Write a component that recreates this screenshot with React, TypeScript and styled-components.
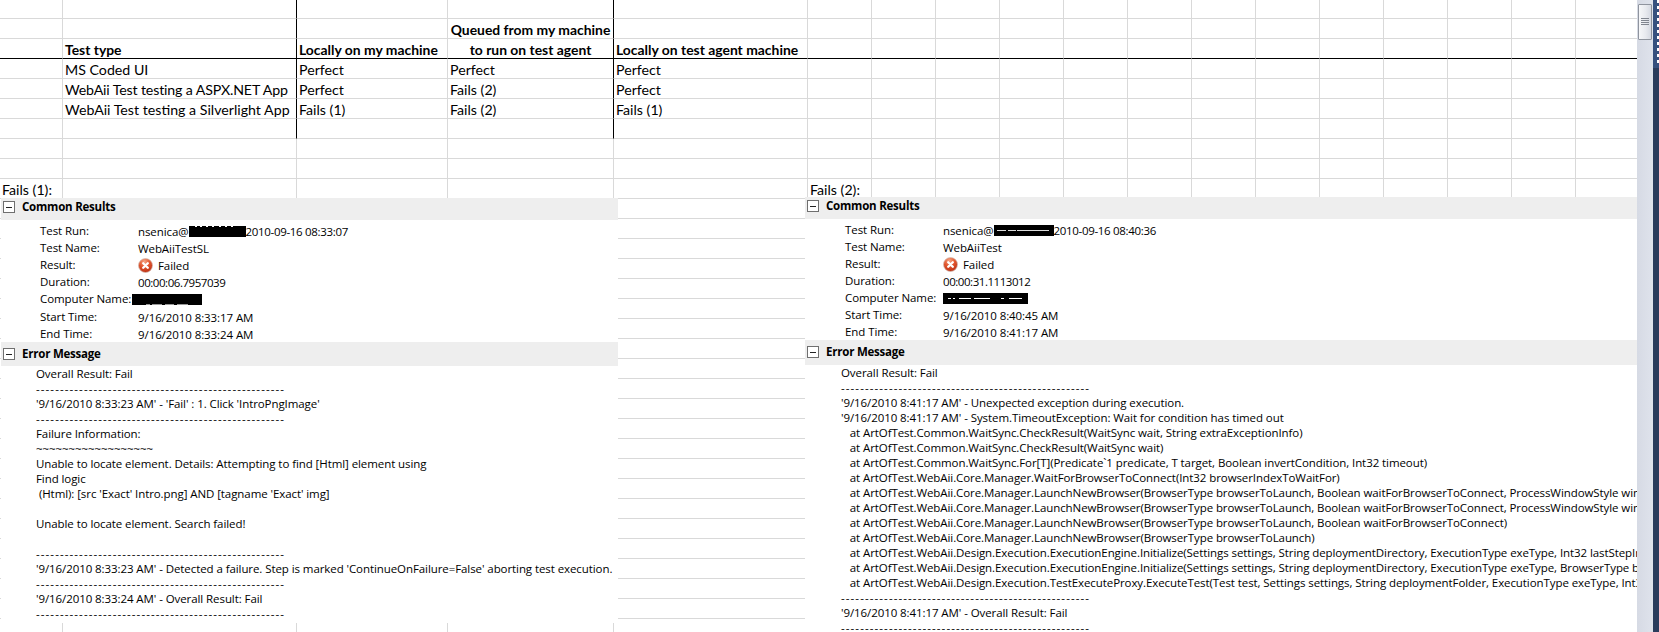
import React from "react";
import styled, { createGlobalStyle } from "styled-components";

const GlobalStyle = createGlobalStyle`
  html, body { margin: 0; padding: 0; background: #fff; overflow: hidden; }
`;

const COLS = [63, 234, 151, 166, 194, 64, 64, 64, 64, 64, 64, 64, 64, 64, 64, 64, 64, 62];
const ROWS = [19, ...Array(31).fill(20)];

const Page = styled.div`
  display: flex;
  width: 1659px;
  height: 632px;
  overflow: hidden;
`;
const Sheet = styled.div`
  position: relative;
  width: 1637px;
  height: 632px;
  overflow: hidden;
`;
const Grid = styled.div`
  display: grid;
  grid-template-columns: ${COLS.map((c) => c + "px").join(" ")};
  grid-template-rows: ${ROWS.map((r) => r + "px").join(" ")};
  font-family: "Lato", sans-serif;
  font-size: 14.2px;
  color: #000;
`;
const Cell = styled.div<{ $rb: boolean; $bb: boolean; $bold?: boolean; $center?: boolean; $tight?: boolean }>`
  box-sizing: border-box;
  border-right: 1px solid ${(p) => (p.$rb ? "#000" : "#d9d9d9")};
  border-bottom: 1px solid ${(p) => (p.$bb ? "#000" : "#d9d9d9")};
  padding: 1px 2px 0 2px;
  font-size: ${(p) => (p.$bold ? "13.9px" : "14.2px")};
  font-weight: ${(p) => (p.$bold ? 700 : 400)};
  text-align: ${(p) => (p.$center ? "center" : "left")};
  letter-spacing: ${(p) => (p.$tight ? "-0.15px" : "normal")};
  line-height: 19px;
  white-space: nowrap;
`;

const Window = styled.div<{ $left: number; $top: number; $width: number; $height: number }>`
  position: absolute;
  left: ${(p) => p.$left}px;
  top: ${(p) => p.$top}px;
  width: ${(p) => p.$width}px;
  height: ${(p) => p.$height}px;
  background: #fff;
  overflow: hidden;
  font-family: "Open Sans", sans-serif;
  font-size: 11.5px;
  letter-spacing: -0.08px;
  color: #000;
`;
const SectionHeader = styled.div<{ $h: number; $top: number }>`
  box-sizing: border-box;
  display: flex;
  align-items: flex-start;
  height: ${(p) => p.$h}px;
  background: #eeeeee;
  padding: ${(p) => p.$top}px 0 0 2px;
  gap: 7px;
`;
const Toggle = styled.span`
  box-sizing: border-box;
  width: 12px;
  height: 12px;
  border: 1px solid #6f6f6f;
  background: #fff;
  display: flex;
  align-items: center;
  justify-content: center;
  &::before {
    content: "";
    width: 6px;
    height: 1px;
    background: #222;
  }
`;
const SectionTitle = styled.span`
  font-weight: 700;
  font-size: 11.5px;
  letter-spacing: -0.22px;
  line-height: 12px;
`;
const Details = styled.div<{ $h: number; $pad: number; $left: number }>`
  box-sizing: border-box;
  height: ${(p) => p.$h}px;
  padding: ${(p) => p.$pad}px 0 0 ${(p) => p.$left}px;
  display: grid;
  grid-template-columns: 98px 1fr;
  grid-auto-rows: 17px;
`;
const Label = styled.span<{ $gap?: boolean }>`
  line-height: 15px;
  white-space: nowrap;
  margin-top: ${(p) => (p.$gap ? 1 : 0)}px;
`;
const Value = styled.span<{ $gap?: boolean }>`
  display: flex;
  align-items: center;
  height: 15px;
  line-height: 15px;
  white-space: pre;
  margin-top: ${(p) => (p.$gap ? 2 : 1)}px;
`;
const Digits = styled.span`
  letter-spacing: -0.45px;
`;
const RunDate = styled.span`
  letter-spacing: -0.32px;
`;
const Redact = styled.span<{ $w: number; $shift?: number }>`
  display: block;
  width: ${(p) => p.$w}px;
  height: 11px;
  background: #000;
  flex: none;
  margin-left: ${(p) => p.$shift ?? 0}px;
`;
const RedactMarks = styled.svg`
  display: block;
`;
const FailedText = styled.span`
  margin-left: 5px;
`;
const Log = styled.div<{ $left: number }>`
  padding-left: ${(p) => p.$left}px;
`;
const LogLine = styled.div`
  height: 15px;
  line-height: 15px;
  white-space: pre;
`;
const DashLine = styled(LogLine)`
  letter-spacing: 1.09px;
`;

const Scrollbar = styled.div`
  box-sizing: border-box;
  width: 16px;
  height: 632px;
  background: linear-gradient(90deg, #d6dae4, #dfe3ec);
  padding: 4px 1px 0 1px;
`;
const Thumb = styled.div`
  box-sizing: border-box;
  width: 14px;
  height: 36px;
  border: 1px solid #8f949e;
  border-radius: 1px;
  background: linear-gradient(90deg, #f6f7f9, #e8eaef 55%, #d5d9e2);
  display: flex;
  flex-direction: column;
  align-items: center;
  justify-content: flex-start;
  padding-top: 13px;
  gap: 1px;
`;
const Grip = styled.span`
  flex: none;
  width: 8px;
  height: 1px;
  background: #80858f;
`;
const Edge = styled.div`
  width: 6px;
  height: 632px;
  background: #2a3c5c;
`;
const EdgeTop = styled.div`
  display: flex;
  justify-content: flex-end;
  height: 68px;
  background: #36507e;
`;
const EdgeDashes = styled.div`
  width: 2px;
  height: 63px;
  background: repeating-linear-gradient(180deg, #fff 0 3px, #36507e 3px 6px);
`;

function FailIcon() {
  return (
    <svg width="15" height="15" viewBox="0 0 15 15" style={{ flex: "none" }}>
      <defs>
        <radialGradient id="failBall" cx="42%" cy="22%" r="85%">
          <stop offset="0%" stopColor="#f5a585" />
          <stop offset="45%" stopColor="#e2562e" />
          <stop offset="100%" stopColor="#b62a10" />
        </radialGradient>
      </defs>
      <circle cx="7.5" cy="7.5" r="7" fill="url(#failBall)" stroke="#d3c0b8" strokeWidth="0.7" />
      <path d="M5.2 5.2 L9.8 9.8 M9.8 5.2 L5.2 9.8" stroke="#fff" strokeWidth="2.3" strokeLinecap="round" />
    </svg>
  );
}

function Marks({ w, y, segs, color }: { w: number; y: number; segs: [number, number][]; color: string }) {
  return (
    <RedactMarks width={w} height={11} viewBox={`0 0 ${w} 11`}>
      {segs.map(([a, b]) => (
        <rect key={a} x={a} y={y} width={b - a} height={1} fill={color} />
      ))}
    </RedactMarks>
  );
}

const cells: Record<string, { t: string; bold?: boolean; center?: boolean; tight?: boolean }> = {
  "1,3": { t: "Queued from my machine", bold: true, center: true },
  "2,1": { t: "Test type", bold: true },
  "2,2": { t: "Locally on my machine", bold: true },
  "2,3": { t: "to run on test agent", bold: true, center: true },
  "2,4": { t: "Locally on test agent machine", bold: true },
  "3,1": { t: "MS Coded UI" },
  "3,2": { t: "Perfect" },
  "3,3": { t: "Perfect" },
  "3,4": { t: "Perfect" },
  "4,1": { t: "WebAii Test testing a ASPX.NET App", tight: true },
  "4,2": { t: "Perfect" },
  "4,3": { t: "Fails (2)" },
  "4,4": { t: "Perfect" },
  "5,1": { t: "WebAii Test testing a Silverlight App" },
  "5,2": { t: "Fails (1)" },
  "5,3": { t: "Fails (2)" },
  "5,4": { t: "Fails (1)" },
  "9,0": { t: "Fails (1):" },
  "9,5": { t: "Fails (2):" },
};

const D = "-".repeat(52);
const logLeft = [
  "Overall Result: Fail",
  D,
  "'9/16/2010 8:33:23 AM' - 'Fail' : 1. Click 'IntroPngImage'",
  D,
  "Failure Information:",
  "~".repeat(18),
  "Unable to locate element. Details: Attempting to find [Html] element using",
  "Find logic",
  " (Html): [src 'Exact' Intro.png] AND [tagname 'Exact' img]",
  "",
  "Unable to locate element. Search failed!",
  "",
  D,
  "'9/16/2010 8:33:23 AM' - Detected a failure. Step is marked 'ContinueOnFailure=False' aborting test execution.",
  D,
  "'9/16/2010 8:33:24 AM' - Overall Result: Fail",
  D,
];

const logRight = [
  "Overall Result: Fail",
  D,
  "'9/16/2010 8:41:17 AM' - Unexpected exception during execution.",
  "'9/16/2010 8:41:17 AM' - System.TimeoutException: Wait for condition has timed out",
  "   at ArtOfTest.Common.WaitSync.CheckResult(WaitSync wait, String extraExceptionInfo)",
  "   at ArtOfTest.Common.WaitSync.CheckResult(WaitSync wait)",
  "   at ArtOfTest.Common.WaitSync.For[T](Predicate`1 predicate, T target, Boolean invertCondition, Int32 timeout)",
  "   at ArtOfTest.WebAii.Core.Manager.WaitForBrowserToConnect(Int32 browserIndexToWaitFor)",
  "   at ArtOfTest.WebAii.Core.Manager.LaunchNewBrowser(BrowserType browserToLaunch, Boolean waitForBrowserToConnect, ProcessWindowStyle windowStyle, Boolean",
  "   at ArtOfTest.WebAii.Core.Manager.LaunchNewBrowser(BrowserType browserToLaunch, Boolean waitForBrowserToConnect, ProcessWindowStyle windowStyle)",
  "   at ArtOfTest.WebAii.Core.Manager.LaunchNewBrowser(BrowserType browserToLaunch, Boolean waitForBrowserToConnect)",
  "   at ArtOfTest.WebAii.Core.Manager.LaunchNewBrowser(BrowserType browserToLaunch)",
  "   at ArtOfTest.WebAii.Design.Execution.ExecutionEngine.Initialize(Settings settings, String deploymentDirectory, ExecutionType exeType, Int32 lastStepIndex, Boolean",
  "   at ArtOfTest.WebAii.Design.Execution.ExecutionEngine.Initialize(Settings settings, String deploymentDirectory, ExecutionType exeType, BrowserType browserType, Boolean",
  "   at ArtOfTest.WebAii.Design.Execution.TestExecuteProxy.ExecuteTest(Test test, Settings settings, String deploymentFolder, ExecutionType exeType, Int32 lastStepIndex)",
  D,
  "'9/16/2010 8:41:17 AM' - Overall Result: Fail",
  D,
];

function ResultWindow(props: {
  left: number; top: number; width: number; height: number;
  detailsLeft: number; bodyH: number; h2: number; startGap: boolean;
  runRedact: React.ReactNode; runDate: string; name: string; duration: string;
  computer: React.ReactNode; start: string; end: string; log: string[]; logLeft: number;
}) {
  const g = props.startGap;
  return (
    <Window $left={props.left} $top={props.top} $width={props.width} $height={props.height}>
      <SectionHeader $h={22} $top={3}><Toggle /><SectionTitle>Common Results</SectionTitle></SectionHeader>
      <Details $h={props.bodyH} $pad={3} $left={props.detailsLeft}>
        <Label>Test Run:</Label><Value>nsenica@{props.runRedact}<RunDate>{props.runDate}</RunDate></Value>
        <Label>Test Name:</Label><Value>{props.name}</Value>
        <Label>Result:</Label><Value><FailIcon /><FailedText>Failed</FailedText></Value>
        <Label>Duration:</Label><Value><Digits>{props.duration}</Digits></Value>
        <Label>Computer Name:</Label><Value>{props.computer}</Value>
        <Label $gap={g}>Start Time:</Label><Value $gap={g}>{props.start}</Value>
        <Label $gap={g}>End Time:</Label><Value $gap={g}>{props.end}</Value>
      </Details>
      <SectionHeader $h={props.h2} $top={6}><Toggle /><SectionTitle>Error Message</SectionTitle></SectionHeader>
      <Log $left={props.logLeft}>
        {props.log.map((line, i) =>
          line === D ? <DashLine key={i}>{line}</DashLine> : <LogLine key={i}>{line}</LogLine>
        )}
      </Log>
    </Window>
  );
}

export default function App() {
  return (
    <>
      <GlobalStyle />
      <Page>
        <Sheet>
          <Grid>
            {ROWS.map((_, r) =>
              COLS.map((_, c) => {
                const d = cells[`${r},${c}`];
                return (
                  <Cell
                    key={`${r}-${c}`}
                    $rb={(c === 1 || c === 3) && r <= 6}
                    $bb={r === 2}
                    $bold={d?.bold}
                    $center={d?.center}
                    $tight={d?.tight}
                  >
                    {d?.t}
                  </Cell>
                );
              })
            )}
          </Grid>
          <ResultWindow
            left={1} top={198} width={617} height={425}
            detailsLeft={39} bodyH={122} h2={24} startGap
            runRedact={
              <Redact $w={57}>
                <Marks w={57} y={0} color="#fff" segs={[[6, 8], [11, 13], [17, 19], [23, 25], [30, 32], [36, 38], [42, 44]]} />
              </Redact>
            }
            runDate="2010-09-16 08:33:07"
            name="WebAiiTestSL" duration="00:00:06.7957039"
            computer={
              <Redact $w={70} $shift={-6}>
                <Marks w={70} y={10} color="#999" segs={[[14, 18], [20, 30], [33, 42], [45, 56]]} />
              </Redact>
            }
            start="9/16/2010 8:33:17 AM" end="9/16/2010 8:33:24 AM"
            log={logLeft} logLeft={35}
          />
          <ResultWindow
            left={805} top={197} width={832} height={435}
            detailsLeft={40} bodyH={121} h2={25} startGap={false}
            runRedact={
              <Redact $w={60}>
                <Marks w={60} y={5} color="#ddd" segs={[[3, 12], [14, 22], [23, 55]]} />
              </Redact>
            }
            runDate="2010-09-16 08:40:36"
            name="WebAiiTest" duration="00:00:31.1113012"
            computer={
              <Redact $w={85}>
                <Marks w={85} y={5} color="#fff" segs={[[5, 8], [10, 12], [16, 28], [31, 47], [58, 61], [66, 79]]} />
              </Redact>
            }
            start="9/16/2010 8:40:45 AM" end="9/16/2010 8:41:17 AM"
            log={logRight} logLeft={36}
          />
        </Sheet>
        <Scrollbar>
          <Thumb><Grip /><Grip /><Grip /><Grip /></Thumb>
        </Scrollbar>
        <Edge><EdgeTop><EdgeDashes /></EdgeTop></Edge>
      </Page>
    </>
  );
}
